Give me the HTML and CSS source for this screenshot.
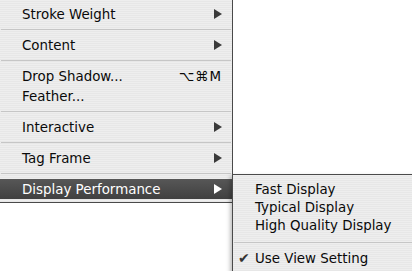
FILE: index.html
```html
<!DOCTYPE html>
<html>
<head>
    <link rel="stylesheet" href="styles.css">
</head>
<body>
    <div class="screen">
        <div class="menu">
            <div class="item"><span>Stroke Weight</span><span class="arrow"></span></div>
            <div class="sep"></div>
            <div class="item"><span>Content</span><span class="arrow"></span></div>
            <div class="sep"></div>
            <div class="item"><span>Drop Shadow...</span><span class="keys">⌥⌘M</span></div>
            <div class="item"><span>Feather...</span></div>
            <div class="sep"></div>
            <div class="item"><span>Interactive</span><span class="arrow"></span></div>
            <div class="sep"></div>
            <div class="item"><span>Tag Frame</span><span class="arrow"></span></div>
            <div class="sep"></div>
            <div class="item active"><span>Display Performance</span><span class="arrow"></span></div>
        </div>

        <div class="submenu">
            <div class="subitem">Fast Display</div>
            <div class="subitem">Typical Display</div>
            <div class="subitem">High Quality Display</div>
            <div class="subsep"></div>
            <div class="subitem checked"><span class="check">✔</span>Use View Setting</div>
        </div>
    </div>
</body>
</html>
```

FILE: styles.css
```css
body {
    margin: 0;
    background: #fff;
    font-family: 'DejaVu Sans', 'Liberation Sans', sans-serif;
    font-size: 13.4px;
    color: #0a0a0a;
}

.screen {
    position: relative;
    width: 412px;
    height: 271px;
    overflow: hidden;
}

/* pinstripe menu background */
.menu,
.submenu {
    background: repeating-linear-gradient(to bottom, #eeeeee 0 1px, #e7e7e7 1px 2px);
}

.menu {
    width: 233px;
    box-sizing: border-box;
    padding: 4px 0 3px;
    border-right: 1px solid #4a4a4a;
    border-bottom: 1px solid #4a4a4a;
}

.item {
    height: 20px;
    display: flex;
    align-items: center;
    justify-content: space-between;
    padding: 0 10px 0 22px;
}

.item.active {
    background: linear-gradient(to bottom, #575757, #404040);
    color: #fff;
}

.arrow {
    width: 0;
    height: 0;
    border-top: 5px solid transparent;
    border-bottom: 5px solid transparent;
    border-left: 8px solid #3a3a3a;
}

.item.active .arrow {
    border-left-color: #fff;
}

.keys {
    letter-spacing: 1px;
}

.sep {
    height: 1px;
    margin: 5px 1px 5px 1px;
    background: #c6c6c6;
}

.submenu {
    position: absolute;
    left: 232px;
    top: 174px;
    width: 200px;
    height: 120px;
    padding-top: 5px;
    border-top: 1px solid #4a4a4a;
    border-left: 1px solid #4a4a4a;
    box-shadow: -2px 2px 4px rgba(0, 0, 0, 0.25);
}

.subitem {
    height: 18px;
    display: flex;
    align-items: center;
    padding-left: 22px;
}

.subsep {
    height: 1px;
    margin: 8px 0 6px 1px;
    background: #c6c6c6;
}

.checked {
    padding-left: 5px;
}

.check {
    width: 17px;
    font-size: 14px;
    color: #333;
}
```
